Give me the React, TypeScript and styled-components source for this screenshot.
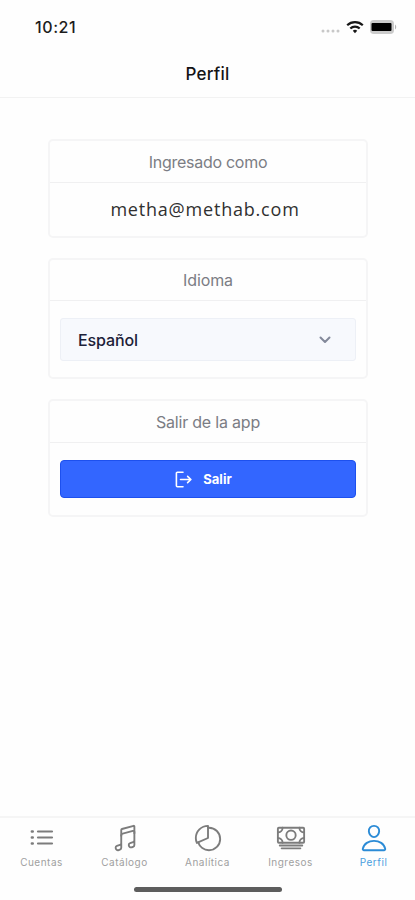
import React from "react";
import styled, { createGlobalStyle } from "styled-components";
import {
  IoCashOutline,
  IoMusicalNotesOutline,
  IoPersonOutline,
  IoPieChartOutline,
} from "react-icons/io5";

const GlobalStyle = createGlobalStyle`
  * { box-sizing: border-box; }
  body { margin: 0; background: #fefefe; font-family: Inter, "Liberation Sans", sans-serif; }
  button { font-family: inherit; }
`;

const Screen = styled.div`
  display: flex;
  flex-direction: column;
  width: 415px;
  height: 900px;
  overflow: hidden;
  background: #fefefe;
`;

const StatusBar = styled.div`
  display: flex;
  align-items: center;
  justify-content: space-between;
  height: 54px;
  padding: 0 18px 0 35px;
`;

const Clock = styled.span`
  font-size: 16px;
  line-height: 20px;
  font-weight: 500;
  letter-spacing: 0.6px;
  color: #1c1c1c;
`;

const StatusIcons = styled.div`
  display: flex;
  align-items: center;
  gap: 6px;
`;

const Header = styled.header`
  display: flex;
  align-items: center;
  justify-content: center;
  height: 44px;
  padding-bottom: 3px;
  border-bottom: 1px solid #f2f2f2;
`;

const Title = styled.h1`
  margin: 0;
  font-size: 17px;
  line-height: 22px;
  font-weight: 500;
  letter-spacing: 0.25px;
  color: #141414;
`;

const Content = styled.main`
  display: flex;
  flex: 1;
  flex-direction: column;
  align-items: center;
  gap: 20px;
  padding-top: 41px;
`;

const Card = styled.section<{ $height: number }>`
  display: flex;
  flex-direction: column;
  width: 320px;
  height: ${({ $height }) => $height}px;
  margin-left: 1px;
  border: 2px solid #f5f5f6;
  border-radius: 5px;
  background: #fefefe;
`;

const CardTitle = styled.h2<{ $height: number; $tracking?: number }>`
  display: flex;
  align-items: center;
  justify-content: center;
  height: ${({ $height }) => $height}px;
  margin: 0;
  border-bottom: 1px solid #f0f0f1;
  font-size: 16px;
  font-weight: 400;
  letter-spacing: ${({ $tracking = -0.27 }) => $tracking}px;
  color: #7b7d84;
`;

const CardBody = styled.div<{ $top?: number }>`
  display: flex;
  flex: 1;
  align-items: flex-start;
  justify-content: center;
  padding: ${({ $top = 17 }) => $top}px 10px 0;
`;

const Email = styled.span`
  padding-right: 6px;
  font-family: "Open Sans", "Noto Sans", sans-serif;
  font-size: 18px;
  line-height: 24px;
  letter-spacing: 0.8px;
  color: #303030;
`;

const Select = styled.button`
  display: flex;
  align-items: center;
  justify-content: space-between;
  width: 296px;
  height: 43px;
  padding: 0 24px 0 17px;
  border: 1px solid #edf0f6;
  border-radius: 3px;
  background: #f7f9fd;
  font-size: 16px;
  font-weight: 500;
  letter-spacing: -0.1px;
  color: #1c2138;
`;

const LogoutButton = styled.button`
  display: flex;
  align-items: center;
  justify-content: center;
  gap: 10px;
  width: 296px;
  height: 38px;
  padding: 0 9px 0 0;
  border: 1px solid #1d50ee;
  border-radius: 4px;
  background: #3366ff;
  font-size: 13px;
  font-weight: 700;
  color: #fff;
`;

const Footer = styled.footer`
  height: 84px;
  border-top: 2px solid #f5f5f5;
`;

const Tabs = styled.nav`
  display: grid;
  grid-template-columns: repeat(5, 83px);
  height: 67px;
`;

const Tab = styled.div<{ $active?: boolean }>`
  display: flex;
  flex-direction: column;
  align-items: center;
  padding-top: 5px;
  color: ${({ $active }) => ($active ? "#2b8bd6" : "#7c7c7c")};

  svg { flex: none; }
`;

const TabLabel = styled.span<{ $active?: boolean }>`
  margin-top: 2px;
  font-size: 10px;
  line-height: 14px;
  letter-spacing: 0.5px;
  color: ${({ $active }) => ($active ? "#4a9fde" : "#a0a0a0")};
`;

const HomeIndicator = styled.div`
  width: 148px;
  height: 5px;
  margin: 2px auto 0;
  border-radius: 3px;
  background: #5d5d5d;
`;

const Signal = () => (
  <svg width="20" height="16" viewBox="0 0 20 16" fill="#c8c8c8">
    {[3, 8, 13, 18].map((x) => (
      <circle key={x} cx={x} cy="12" r="1.5" />
    ))}
  </svg>
);

const Wifi = () => (
  <svg width="18" height="14" viewBox="0 0 18 14" fill="none" stroke="#171717" strokeWidth="2.2">
    <path d="M1.2 5.2a11.2 11.2 0 0 1 15.6 0" />
    <path d="M4.3 8.5a6.7 6.7 0 0 1 9.4 0" />
    <path d="M6.8 10.8a3.1 3.1 0 0 1 4.4 0L9 13.2z" fill="#171717" stroke="none" />
  </svg>
);

const Battery = () => (
  <svg width="27" height="14" viewBox="0 0 27 14">
    <rect x="0" y="0" width="24" height="14" rx="3.8" fill="#cbcbcb" />
    <rect x="1.5" y="3" width="20" height="8" rx="1" fill="#000" />
    <path d="M25 4.5c1.6.7 1.6 4.3 0 5z" fill="#b4b4b4" />
  </svg>
);

const Chevron = () => (
  <svg width="12" height="8" viewBox="0 0 12 8" fill="none" stroke="#83899a" strokeWidth="2" strokeLinecap="round" strokeLinejoin="round">
    <path d="M1.5 1.5 6 6l4.5-4.5" />
  </svg>
);

const LogoutIcon = () => (
  <svg width="18" height="17" viewBox="0 0 18 17" fill="none" stroke="#fff" strokeWidth="1.6" strokeLinecap="round" strokeLinejoin="round">
    <path d="M8 1.3H2.4a1 1 0 0 0-1 1v12.4a1 1 0 0 0 1 1H8" />
    <path d="M5.5 8.5h10.2M12.6 5.4l3.3 3.1-3.3 3.1" />
  </svg>
);

const ListIcon = ({ size }: { size: number }) => (
  <svg width={size} height={size} viewBox="0 0 30 30" fill="none" stroke="currentColor" strokeWidth="2.2" strokeLinecap="round">
    <path d="M11 8.5h14M11 14.5h14M11 20.5h14" />
    <path d="M4.9 8.5h.8M4.9 14.5h.8M4.9 20.5h.8" strokeWidth="2.6" />
  </svg>
);

const tabs = [
  { label: "Cuentas", Icon: ListIcon, size: 30 },
  { label: "Catálogo", Icon: IoMusicalNotesOutline, size: 30 },
  { label: "Analítica", Icon: IoPieChartOutline, size: 30 },
  { label: "Ingresos", Icon: IoCashOutline, size: 30 },
  { label: "Perfil", Icon: IoPersonOutline, size: 30, active: true },
];

export default function App() {
  return (
    <Screen>
      <GlobalStyle />
      <StatusBar>
        <Clock>10:21</Clock>
        <StatusIcons>
          <Signal />
          <Wifi />
          <Battery />
        </StatusIcons>
      </StatusBar>
      <Header>
        <Title>Perfil</Title>
      </Header>
      <Content>
        <Card $height={99}>
          <CardTitle $height={42}>Ingresado como</CardTitle>
          <CardBody $top={14}>
            <Email>metha@methab.com</Email>
          </CardBody>
        </Card>
        <Card $height={121}>
          <CardTitle $height={41} $tracking={-0.1}>Idioma</CardTitle>
          <CardBody>
            <Select>
              Español
              <Chevron />
            </Select>
          </CardBody>
        </Card>
        <Card $height={118}>
          <CardTitle $height={42} $tracking={-0.2}>Salir de la app</CardTitle>
          <CardBody>
            <LogoutButton>
              <LogoutIcon />
              Salir
            </LogoutButton>
          </CardBody>
        </Card>
      </Content>
      <Footer>
        <Tabs>
          {tabs.map(({ label, Icon, size, active }) => (
            <Tab key={label} $active={active}>
              <Icon size={size} />
              <TabLabel $active={active}>{label}</TabLabel>
            </Tab>
          ))}
        </Tabs>
        <HomeIndicator />
      </Footer>
    </Screen>
  );
}
